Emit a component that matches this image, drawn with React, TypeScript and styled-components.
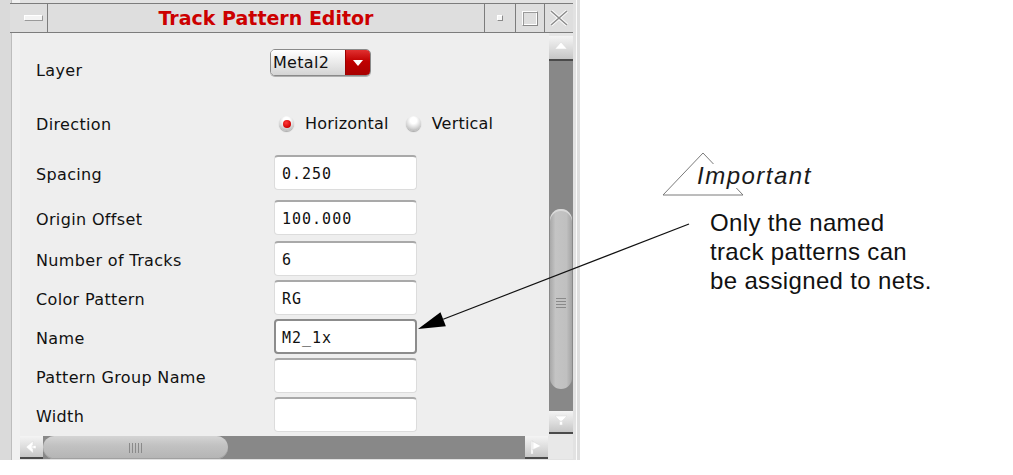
import React from "react";
import styled, { createGlobalStyle } from "styled-components";

const GlobalStyle = createGlobalStyle`
  html, body { margin: 0; padding: 0; background: #ffffff; }
  body { width: 1013px; height: 475px; overflow: hidden; font-family: "DejaVu Sans", sans-serif; }
`;

const Page = styled.div`
  position: relative;
  display: flex;
  width: 1013px;
  height: 475px;
  background: #fff;
`;

const Window = styled.div`
  width: 580px;
  height: 460px;
  box-sizing: border-box;
  display: flex;
  flex-direction: column;
  padding: 3px 7px 0 20px;
  background:
    linear-gradient(to right, #dadada 0 11px, #bdbdbd 11px 12px, #f1f1f1 12px 20px, transparent 20px),
    linear-gradient(to left, #dedede 0 3px, #fbfbfb 3px 4px, #e2e2e2 4px 7px, transparent 7px),
    #e2e2e2;
`;

const TitleBar = styled.div`
  display: flex;
  height: 30px;
  box-sizing: border-box;
  border-top: 1px solid #7c7c7c;
  border-bottom: 1px solid #7c7c7c;
  background: #dedede;
  margin-left: -10px;
  padding-left: 10px;
`;

const TitleButton = styled.div<{ $w: number; $left?: boolean }>`
  width: ${(p) => p.$w}px;
  flex: none;
  display: flex;
  align-items: center;
  justify-content: center;
  box-sizing: border-box;
  ${(p) => (p.$left ? "border-right: 1px solid #7c7c7c;" : "border-left: 1px solid #7c7c7c;")}
`;

const MenuBar = styled.div`
  width: 17px;
  height: 4px;
  background: #f4f4f4;
  border: 1px solid #9a9a9a;
  border-top-color: #fff;
  border-left-color: #fff;
`;

const MinBox = styled.div`
  width: 4px;
  height: 4px;
  background: #f6f6f6;
  border: 1px solid #8a8a8a;
  border-top-color: #fff;
  border-left-color: #fff;
`;

const MaxBox = styled.div`
  width: 14px;
  height: 13px;
  border: 1px solid #8a8a8a;
  border-top-color: #fdfdfd;
  border-left-color: #fdfdfd;
  box-shadow: inset 1px 1px 0 #9a9a9a, inset -1px -1px 0 #fff;
`;

const Title = styled.div`
  flex: 1;
  display: flex;
  align-items: center;
  justify-content: center;
  font-family: "DejaVu Sans", sans-serif;
  font-weight: bold;
  font-size: 19px;
  color: #cc0000;
  letter-spacing: 0;
`;

const Body = styled.div`
  display: flex;
  height: 403px;
`;

const Content = styled.div`
  width: 529px;
  height: 403px;
  overflow: hidden;
  box-sizing: border-box;
  padding-top: 9px;
  background: #eeeeee;
  display: flex;
  flex-direction: column;
`;

const Row = styled.div<{ $h: number }>`
  display: flex;
  align-items: center;
  height: ${(p) => p.$h}px;
  flex: none;
`;

const Label = styled.div`
  width: 238px;
  padding: 3px 0 0 16px;
  flex: none;
  font-family: "DejaVu Sans", sans-serif;
  font-size: 16px;
  letter-spacing: 0.35px;
  color: #111;
  white-space: nowrap;
`;

const Dropdown = styled.div`
  align-self: flex-start;
  margin-top: 7px;
  margin-left: -4px;
  width: 101px;
  height: 27px;
  box-sizing: border-box;
  display: flex;
  border: 1px solid #8a8a8a;
  border-radius: 5px;
  overflow: hidden;
  box-shadow: 0 1px 0 #b0b0b0;
`;

const DropText = styled.div`
  flex: 1;
  display: flex;
  align-items: center;
  padding-left: 2px;
  background: linear-gradient(#ffffff, #e6e6e6 60%, #d4d4d4);
  font-family: "DejaVu Sans", sans-serif;
  font-size: 16px;
  letter-spacing: 0.3px;
  color: #111;
`;

const DropArrow = styled.div`
  width: 24px;
  display: flex;
  align-items: center;
  justify-content: center;
  background: linear-gradient(#e03030, #c00000 45%, #a80000);
  border-left: 1px solid #900;
`;

const RadioGroup = styled.div`
  display: flex;
  align-items: center;
  margin-left: 5px;
  padding-top: 2px;
`;

const RadioItem = styled.div`
  display: flex;
  align-items: center;
  margin-right: 17px;
  font-family: "DejaVu Sans", sans-serif;
  font-size: 16px;
  letter-spacing: 0.2px;
  color: #111;
`;

const RadioDot = styled.div<{ $on?: boolean }>`
  width: 15px;
  height: 15px;
  border-radius: 50%;
  margin-right: 11px;
  box-sizing: border-box;
  display: flex;
  align-items: center;
  justify-content: center;
  background: radial-gradient(circle at 50% 30%, #ffffff 0 25%, #d6d6d6 60%, #9c9c9c 100%);
  box-shadow: 0 1px 1px #a8a8a8;
  &::after {
    content: "";
    display: ${(p) => (p.$on ? "block" : "none")};
    width: 8px;
    height: 8px;
    border-radius: 50%;
    background: radial-gradient(circle at 40% 35%, #ff3a3a, #d00000 70%, #a00000);
  }
`;

const Field = styled.div<{ $focus?: boolean }>`
  width: 143px;
  height: 35px;
  box-sizing: border-box;
  background: #fff;
  border-radius: 4px;
  border: ${(p) => (p.$focus ? "2px solid #8c8c8c" : "1px solid #dcdcdc")};
  border-top: ${(p) => (p.$focus ? "2px solid #8c8c8c" : "2px solid #a9a9a9")};
  display: flex;
  align-items: center;
  padding: 2px 0 0 ${(p) => (p.$focus ? 6 : 7)}px;
  font-family: "DejaVu Sans Mono", monospace;
  font-size: 15px;
  letter-spacing: 1px;
  color: #111;
`;

const VScroll = styled.div`
  width: 24px;
  display: flex;
  flex-direction: column;
  padding-top: 3px;
  background: #e6e6e6;
`;

const ArrowButton = styled.div<{ $h: number }>`
  height: ${(p) => p.$h}px;
  flex: none;
  box-sizing: border-box;
  display: flex;
  align-items: center;
  justify-content: center;
  background: linear-gradient(#f4f4f4, #dcdcdc 55%, #c6c6c6);
  border-bottom: 2px solid #4a4a4a;
`;

const VTrack = styled.div`
  flex: 1;
  background: #888888;
  display: flex;
  flex-direction: column;
  align-items: center;
`;

const VThumb = styled.div`
  margin-top: 148px;
  width: 22px;
  height: 180px;
  box-sizing: border-box;
  border-radius: 11px;
  background: linear-gradient(to right, #a8a8a8, #c4c4c4 25%, #c0c0c0 75%, #a4a4a4);
  box-shadow: inset 0 2px 0 #dadada;
  display: flex;
  flex-direction: column;
  align-items: center;
  justify-content: center;
  gap: 2px;
  padding-top: 8px;
`;

const GripLine = styled.div<{ $vertical?: boolean }>`
  width: ${(p) => (p.$vertical ? "1px" : "10px")};
  height: ${(p) => (p.$vertical ? "10px" : "1px")};
  background: #8a8a8a;
`;

const BottomGap = styled.div`
  height: 2px;
  flex: none;
`;

const HScroll = styled.div`
  display: flex;
  height: 23px;
`;

const HArrowButton = styled.div`
  width: 23px;
  flex: none;
  box-sizing: border-box;
  display: flex;
  align-items: center;
  justify-content: center;
  background: linear-gradient(#f4f4f4, #dcdcdc 55%, #c6c6c6);
  border-bottom: 2px solid #4a4a4a;
`;

const HTrack = styled.div`
  flex: 1;
  background: #888888;
  display: flex;
  align-items: stretch;
`;

const HThumb = styled.div`
  width: 185px;
  border-radius: 12px;
  background: linear-gradient(#d4d4d4, #c2c2c2 40%, #b4b4b4);
  box-shadow: inset 0 -1px 0 #a0a0a0;
  display: flex;
  align-items: center;
  justify-content: center;
  gap: 2px;
`;

const Corner = styled.div`
  width: 25px;
  flex: none;
  background: #e8e8e8;
`;

const Annotation = styled.div`
  flex: 1;
  display: flex;
  flex-direction: column;
  align-items: flex-start;
  padding: 164px 0 0 117px;
`;

const Heading = styled.div`
  position: relative;
  height: 24px;
`;

const HeadingTriangle = styled.svg`
  position: absolute;
  left: -40px;
  top: -15px;
`;

const HeadingText = styled.div`
  position: relative;
  font-family: "Liberation Sans", Arial, sans-serif;
  font-style: italic;
  font-size: 24px;
  line-height: 24px;
  letter-spacing: 1.5px;
  color: #1a1a1a;
  background: #fff;
  padding-right: 2px;
`;

const Note = styled.div`
  margin: 20px 0 0 13px;
  font-family: "Liberation Sans", Arial, sans-serif;
  font-size: 24px;
  line-height: 29px;
  letter-spacing: 0.35px;
  color: #111;
`;

const Overlay = styled.svg`
  position: absolute;
  left: 0;
  top: 0;
  pointer-events: none;
`;

const Tri = ({ dir }: { dir: "up" | "down" | "left" | "right" }) => {
  const shapes: Record<string, string> = {
    up: "M1 8 L7 1 L13 8 Z",
    down: "M1 1 L13 1 L7 7 Z M5.5 6 L8.5 6 L8.5 10 L5.5 10 Z",
    left: "M8 1 L8 13 L1 7 Z M7 5.5 L11 5.5 L11 8.5 L7 8.5 Z",
    right: "M2 1 L11 6 L2 10 Z M1 1 L3 1 L3 14 L1 14 Z",
  };
  return (
    <svg width="14" height="14" viewBox="0 0 14 14">
      <path d={shapes[dir]} fill="#ffffff" stroke="#d8d8d8" strokeWidth="0.5" />
    </svg>
  );
};

const fields: { label: string; value: string; h: number; focus?: boolean }[] = [
  { label: "Spacing", value: "0.250", h: 47 },
  { label: "Origin Offset", value: "100.000", h: 43 },
  { label: "Number of Tracks", value: "6", h: 39 },
  { label: "Color Pattern", value: "RG", h: 39 },
  { label: "Name", value: "M2_1x", h: 39, focus: true },
  { label: "Pattern Group Name", value: "", h: 39 },
  { label: "Width", value: "", h: 39 },
];

export default function App() {
  const tip = { x: 418, y: 329 };
  const start = { x: 689, y: 224 };
  const dx = tip.x - start.x;
  const dy = tip.y - start.y;
  const len = Math.hypot(dx, dy);
  const ux = dx / len;
  const uy = dy / len;
  const L = 27;
  const W = 7.5;
  const bx = tip.x - ux * L;
  const by = tip.y - uy * L;
  const head = `${tip.x},${tip.y} ${bx - uy * W},${by + ux * W} ${bx + uy * W},${by - ux * W}`;

  return (
    <>
      <GlobalStyle />
      <Page>
        <Window>
          <TitleBar>
            <TitleButton $w={28} $left>
              <MenuBar />
            </TitleButton>
            <Title>Track Pattern Editor</Title>
            <TitleButton $w={31}>
              <MinBox />
            </TitleButton>
            <TitleButton $w={29}>
              <MaxBox />
            </TitleButton>
            <TitleButton $w={29}>
              <svg width="20" height="16" viewBox="0 0 20 16">
                <path d="M2 1 L18 15 M18 1 L2 15" stroke="#fafafa" strokeWidth="3.5" />
                <path d="M2 1 L18 15 M18 1 L2 15" stroke="#8c8c8c" strokeWidth="1.5" />
              </svg>
            </TitleButton>
          </TitleBar>
          <Body>
            <Content>
              <Row $h={54}>
                <Label>Layer</Label>
                <Dropdown>
                  <DropText>Metal2</DropText>
                  <DropArrow>
                    <svg width="10" height="6" viewBox="0 0 10 6">
                      <path d="M0 0 L10 0 L5 6 Z" fill="#fff" />
                    </svg>
                  </DropArrow>
                </Dropdown>
              </Row>
              <Row $h={53}>
                <Label>Direction</Label>
                <RadioGroup>
                  <RadioItem>
                    <RadioDot $on />
                    Horizontal
                  </RadioItem>
                  <RadioItem>
                    <RadioDot />
                    Vertical
                  </RadioItem>
                </RadioGroup>
              </Row>
              {fields.map((f) => (
                <Row $h={f.h} key={f.label}>
                  <Label>{f.label}</Label>
                  <Field $focus={f.focus}>{f.value}</Field>
                </Row>
              ))}
            </Content>
            <VScroll>
              <ArrowButton $h={25}>
                <Tri dir="up" />
              </ArrowButton>
              <VTrack>
                <VThumb>
                  <GripLine />
                  <GripLine />
                  <GripLine />
                  <GripLine />
                </VThumb>
              </VTrack>
              <ArrowButton $h={23}>
                <Tri dir="down" />
              </ArrowButton>
              <BottomGap />
            </VScroll>
          </Body>
          <HScroll>
            <HArrowButton>
              <Tri dir="left" />
            </HArrowButton>
            <HTrack>
              <HThumb>
                <GripLine $vertical />
                <GripLine $vertical />
                <GripLine $vertical />
                <GripLine $vertical />
                <GripLine $vertical />
              </HThumb>
            </HTrack>
            <HArrowButton>
              <Tri dir="right" />
            </HArrowButton>
            <Corner />
          </HScroll>
        </Window>
        <Annotation>
          <Heading>
            <HeadingTriangle width="100" height="50" viewBox="0 0 100 50">
              <polygon points="46,4 6,46 86,46" fill="none" stroke="#7a7a7a" strokeWidth="1" />
            </HeadingTriangle>
            <HeadingText>Important</HeadingText>
          </Heading>
          <Note>
            Only the named
            <br />
            track patterns can
            <br />
            be assigned to nets.
          </Note>
        </Annotation>
        <Overlay width="1013" height="475" viewBox="0 0 1013 475">
          <line x1={start.x} y1={start.y} x2={bx} y2={by} stroke="#111" strokeWidth="1.3" />
          <polygon points={head} fill="#000" />
        </Overlay>
      </Page>
    </>
  );
}
